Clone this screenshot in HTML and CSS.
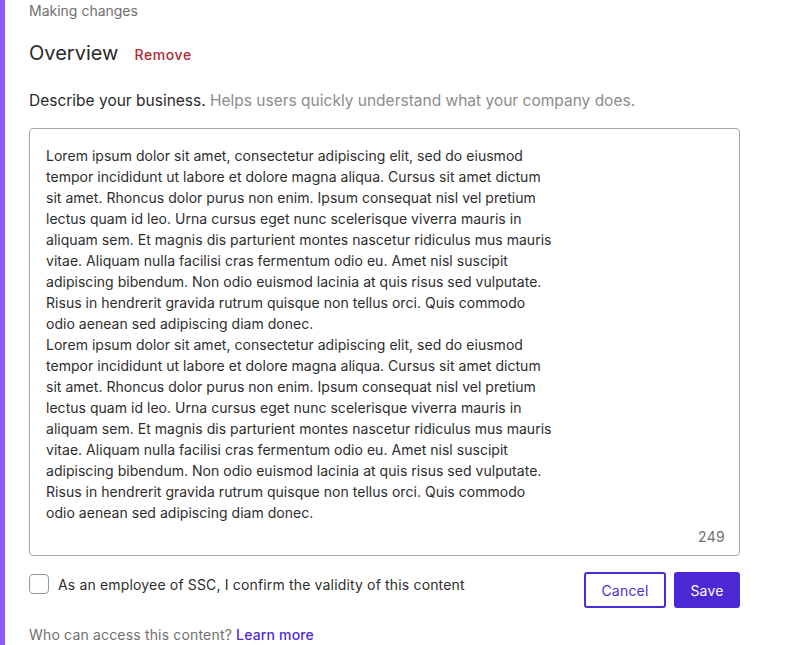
FILE: index.html
```html
<!DOCTYPE html>
<html>
<head>
<meta charset="utf-8">
<link rel="stylesheet" href="styles.css">
</head>
<body>
<div class="page">
  <div class="accent"></div>
  <main class="content">
    <div class="crumb">Making changes</div>
    <div class="head">
      <h2 class="title">Overview</h2>
      <a class="remove">Remove</a>
    </div>
    <p class="desc"><span class="desc-strong">Describe your business.</span> <span class="desc-hint">Helps users quickly understand what your company does.</span></p>
    <div class="editor">
      <div class="editor-text">Lorem ipsum dolor sit amet, consectetur adipiscing elit, sed do eiusmod<br>tempor incididunt ut labore et dolore magna aliqua. Cursus sit amet dictum<br>sit amet. Rhoncus dolor purus non enim. Ipsum consequat nisl vel pretium<br>lectus quam id leo. Urna cursus eget nunc scelerisque viverra mauris in<br>aliquam sem. Et magnis dis parturient montes nascetur ridiculus mus mauris<br>vitae. Aliquam nulla facilisi cras fermentum odio eu. Amet nisl suscipit<br>adipiscing bibendum. Non odio euismod lacinia at quis risus sed vulputate.<br>Risus in hendrerit gravida rutrum quisque non tellus orci. Quis commodo<br>odio aenean sed adipiscing diam donec.<br>Lorem ipsum dolor sit amet, consectetur adipiscing elit, sed do eiusmod<br>tempor incididunt ut labore et dolore magna aliqua. Cursus sit amet dictum<br>sit amet. Rhoncus dolor purus non enim. Ipsum consequat nisl vel pretium<br>lectus quam id leo. Urna cursus eget nunc scelerisque viverra mauris in<br>aliquam sem. Et magnis dis parturient montes nascetur ridiculus mus mauris<br>vitae. Aliquam nulla facilisi cras fermentum odio eu. Amet nisl suscipit<br>adipiscing bibendum. Non odio euismod lacinia at quis risus sed vulputate.<br>Risus in hendrerit gravida rutrum quisque non tellus orci. Quis commodo<br>odio aenean sed adipiscing diam donec.</div>
      <div class="counter">249</div>
    </div>
    <div class="actions">
      <label class="confirm"><span class="box"></span><span>As an employee of SSC, I confirm the validity of this content</span></label>
      <div class="buttons">
        <button class="btn btn-outline">Cancel</button>
        <button class="btn btn-primary">Save</button>
      </div>
    </div>
    <p class="access">Who can access this content? <a class="learn">Learn more</a></p>
  </main>
</div>
</body>
</html>
```
FILE: styles.css
```css
* { box-sizing: border-box; }
html, body { margin: 0; padding: 0; background: #fff; }
body { font-family: Inter, "Noto Sans", sans-serif; color: #2b2b2b; }
.page { display: flex; min-height: 645px; }
.accent { width: 5px; background: #8b5cf6; flex: none; }
.content { padding: 0 0 0 24px; width: 740px; }
.crumb { font-size: 14px; color: #6f6f6f; line-height: 20px; margin-top: 1px; }
.head { display: flex; align-items: baseline; gap: 16px; margin-top: 20px; }
.title { margin: 0; font-size: 20px; font-weight: 400; line-height: 24px; color: #2a2a2a; }
.remove { font-size: 14px; font-weight: 500; color: #b3262e; letter-spacing: 0.6px; }
.desc { margin: 24px 0 0; font-size: 15.5px; line-height: 24px; }
.desc-strong { color: #2a2a2a; }
.desc-hint { color: #8c8c8c; }
.editor { margin-top: 15px; border: 1px solid #a6a6a6; border-radius: 4px; height: 428px; padding: 16px 16px 0; position: relative; width: 711px; }
.editor-text { font-size: 14px; line-height: 21px; color: #2d2d2d; letter-spacing: 0.03px; }
.counter { position: absolute; right: 14px; bottom: 10px; font-size: 14px; color: #707070; letter-spacing: 0.3px; }
.actions { display: flex; justify-content: space-between; align-items: flex-start; margin-top: 16px; width: 711px; }
.confirm { display: flex; align-items: center; gap: 9px; font-size: 14px; color: #2d2d2d; margin-top: 2px; letter-spacing: 0.16px; }
.box { width: 20px; height: 20px; border: 1px solid #9a9a9a; border-radius: 4px; display: inline-block; }
.buttons { display: flex; gap: 8px; }
.btn { font-family: inherit; font-size: 14px; height: 36px; border-radius: 3px; cursor: pointer; letter-spacing: 0.2px; }
.btn-outline { background: #fff; border: 2px solid #4f2bd6; color: #4f2bd6; width: 82px; }
.btn-primary { background: #4c28d4; border: none; color: #fff; width: 66px; }
.access { margin: 17px 0 0; font-size: 14px; color: #707070; line-height: 20px; letter-spacing: 0.17px; }
.learn { color: #4f2bd6; font-weight: 500; }
```
